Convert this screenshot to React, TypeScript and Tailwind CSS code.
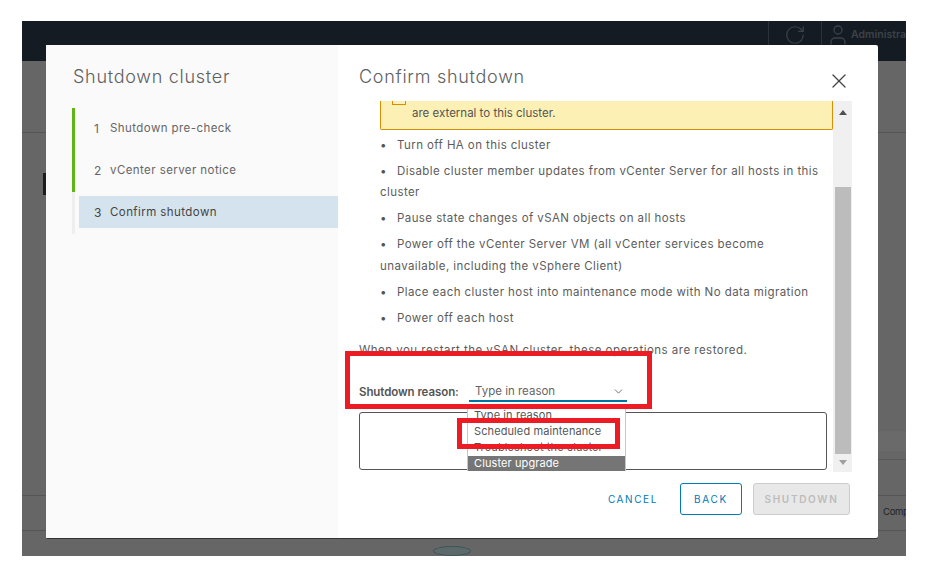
import React from "react";
import { RotateCw, User, X, ChevronDown } from "lucide-react";

const font = { fontFamily: "Inter, 'Liberation Sans', sans-serif" };

function Step({ n, label, active }: { n: number; label: string; active?: boolean }) {
  return (
    <div className={`h-[32px] flex items-center pl-[15px] pt-[1px] ${active ? "bg-[#d5e3ee] text-[#444]" : "text-[#666]"}`}>
      <span className="w-[16px] text-[12px]">{n}</span>
      <span className="text-[11.5px] tracking-[0.42px]">{label}</span>
    </div>
  );
}

function Bullet({ children, className = "" }: { children: React.ReactNode; className?: string }) {
  return (
    <p className={`ml-[21px] ${className}`}>
      <span className="inline-block w-[17px] text-[#555] tracking-normal">•</span>
      {children}
    </p>
  );
}

export default function App() {
  return (
    <div className="w-[928px] h-[585px] bg-white pt-[21px] pl-[22px] overflow-hidden" style={font}>
      <div className="relative w-[884px] h-[535px] bg-[#666666] overflow-hidden">
        {/* Dimmed application behind the dialog */}
        <header className="h-[40px] bg-[#141b23] flex items-start justify-end text-[#3d4248]">
          <div className="w-[53px] h-[28px] border-l border-[#2c3238] flex items-center justify-center">
            <RotateCw size={22} strokeWidth={1.3} />
          </div>
          <div className="w-[85px] h-[28px] border-l border-[#2c3238] pl-[4px] flex items-center gap-[1px] overflow-hidden">
            <User size={24} strokeWidth={1.3} className="shrink-0" />
            <span className="text-[10.5px] font-semibold">Administra</span>
          </div>
        </header>
        <div className="absolute left-0 top-[111px] w-[24px] h-[1px] bg-[#555]" />
        <div className="absolute left-[21px] top-[152px] w-[3px] h-[22px] bg-[#1a1d20]" />
        <div className="absolute left-0 top-[474px] w-[24px] h-[1px] bg-[#555]" />
        <div className="absolute left-0 top-[509px] w-[24px] h-[1px] bg-[#555]" />
        <div className="absolute right-0 top-[111px] w-[28px] h-[1px] bg-[#555]" />
        <div className="absolute right-0 top-[410px] w-[28px] h-[20px] bg-[#6a6a6a]" />
        <div className="absolute right-0 top-[438px] w-[28px] h-[1px] bg-[#585858]" />
        <div className="absolute right-0 top-[474px] w-[28px] h-[1px] bg-[#555]" />
        <div className="absolute right-0 top-[509px] w-[28px] h-[1px] bg-[#555]" />
        <span className="absolute left-[861px] top-[484px] text-[9.5px] tracking-[-0.3px] text-[#222]">Comp</span>
        <div className="absolute left-[411px] top-[525px] w-[38px] h-[10px] rounded-[50%] bg-[#5d6a6c] border border-[#3f5558]" />

        {/* Dialog */}
        <div className="absolute left-[24px] top-[24px] w-[832px] h-[493px] bg-white rounded-[2px] flex shadow-[0_1px_0_#333]">
          <aside className="w-[292px] bg-[#fafafa] pl-[27px] pt-[20px]">
            <h2 className="text-[18px] font-light text-[#606060] leading-[24px] tracking-[0.72px]">Shutdown cluster</h2>
            <div className="mt-[19px] -ml-[1px] flex">
              <div className="w-[3px] h-[126px] bg-[#eeeeee]">
                <div className="h-[84px] bg-[#60b515]" />
              </div>
              <div className="flex-1 ml-[4px] flex flex-col gap-[10px] pt-[4px]">
                <Step n={1} label="Shutdown pre-check" />
                <Step n={2} label="vCenter server notice" />
                <Step n={3} label="Confirm shutdown" active />
              </div>
            </div>
          </aside>

          <main className="relative flex-1 pl-[21px] pt-[20px] text-[#565656]">
            <h2 className="text-[18px] font-light text-[#606060] leading-[24px] tracking-[0.72px]">Confirm shutdown</h2>
            <button className="absolute right-[27px] top-[24px] text-[#444]">
              <X size={24} strokeWidth={1.3} />
            </button>

            <div className="mt-[12px] w-[493px] h-[371px] flex">
              <div className="w-[474px] h-full overflow-hidden text-[11.5px] leading-[21px] tracking-[0.42px]">
                <div className="ml-[21px] h-[29px] bg-[#fdf0b4] border border-t-0 border-[#d98e04] rounded-b-[2px] pl-[31px] pt-[2px] leading-[20px] text-[#555] relative tracking-[0px]">
                  <div className="absolute left-[11px] top-[0px] w-[14px] h-[4px] border border-t-0 border-[#d98e04]" />
                  are external to this cluster.
                </div>
                <div className="mt-[5px] text-[#5c5c5c]">
                  <Bullet>Turn off HA on this cluster</Bullet>
                  <Bullet className="mt-[5px]">Disable cluster member updates from vCenter Server for all hosts in this cluster</Bullet>
                  <Bullet className="mt-[5px]">Pause state changes of vSAN objects on all hosts</Bullet>
                  <Bullet className="mt-[4px] leading-[22px]">Power off the vCenter Server VM (all vCenter services become unavailable, including the vSphere Client)</Bullet>
                  <Bullet className="mt-[5px]">Place each cluster host into maintenance mode with No data migration</Bullet>
                  <Bullet className="mt-[5px]">Power off each host</Bullet>
                  <p className="mt-[11px] tracking-[0.48px]">When you restart the vSAN cluster, these operations are restored.</p>
                </div>
                <div className="mt-[20px] flex items-center h-[21px]">
                  <label className="w-[110px] pt-[1px] font-semibold text-[#555] tracking-[-0.08px]">Shutdown reason:</label>
                  <div className="w-[158px] h-[21px] border-b-2 border-[#0072a3] flex items-center justify-between pl-[6px] pr-[2px] pt-[1px] text-[#666] tracking-[0px]">
                    <span>Type in reason</span>
                    <ChevronDown size={13} strokeWidth={1.5} className="text-[#555]" />
                  </div>
                </div>
                <textarea className="block mt-[10px] w-[468px] h-[58px] border border-[#555] rounded-[3px] bg-white resize-none" />
              </div>

              {/* Scrollbar */}
              <div className="w-[19px] h-full bg-[#f0f0f0] flex flex-col items-center pl-[1px]">
                <div className="h-[86px] w-full flex justify-center pt-[9px]">
                  <div className="w-0 h-0 border-x-[4px] border-x-transparent border-b-[5px] border-b-[#505050]" />
                </div>
                <div className="w-[16px] h-[267px] bg-[#bcbcbc]" />
                <div className="pt-[6px]">
                  <div className="w-0 h-0 border-x-[4px] border-x-transparent border-t-[5px] border-t-[#a0a0a0]" />
                </div>
              </div>
            </div>

            <footer className="mt-[11px] flex items-center justify-end w-[491px] gap-[11px]">
              <button className="text-[10px] tracking-[1.6px] text-[#0079b8] mr-[11px]">CANCEL</button>
              <button className="w-[62px] h-[32px] border border-[#0079b8] rounded-[3px] text-[10px] tracking-[1.7px] text-[#0079b8]">BACK</button>
              <button className="w-[97px] h-[32px] bg-[#e8e8e8] border border-[#cccccc] rounded-[3px] text-[10px] font-semibold tracking-[1.7px] text-[#bcbcbc]">SHUTDOWN</button>
            </footer>

            {/* Open native list */}
            <div className="absolute left-[129px] top-[363px] w-[159px] h-[63px] bg-white border-x border-[#c8c8c8] text-[11px] leading-[15px] tracking-[0.1px] text-[#555] flex flex-col">
              <div className="h-[16px] pl-[6px]">Type in reason</div>
              <div className="h-[16px] pl-[6px]">Scheduled maintenance</div>
              <div className="h-[16px] pl-[6px]">Troubleshoot the cluster</div>
              <div className="h-[15px] pl-[6px] bg-[#757575] text-white">Cluster upgrade</div>
            </div>

            {/* Annotations */}
            <div className="absolute left-[7px] top-[306px] w-[307px] h-[58px] border-[5px] border-[#ed1c24]" />
            <div className="absolute left-[119px] top-[373px] w-[163px] h-[31px] border-[5px] border-[#ed1c24]" />
          </main>
        </div>
      </div>
    </div>
  );
}
